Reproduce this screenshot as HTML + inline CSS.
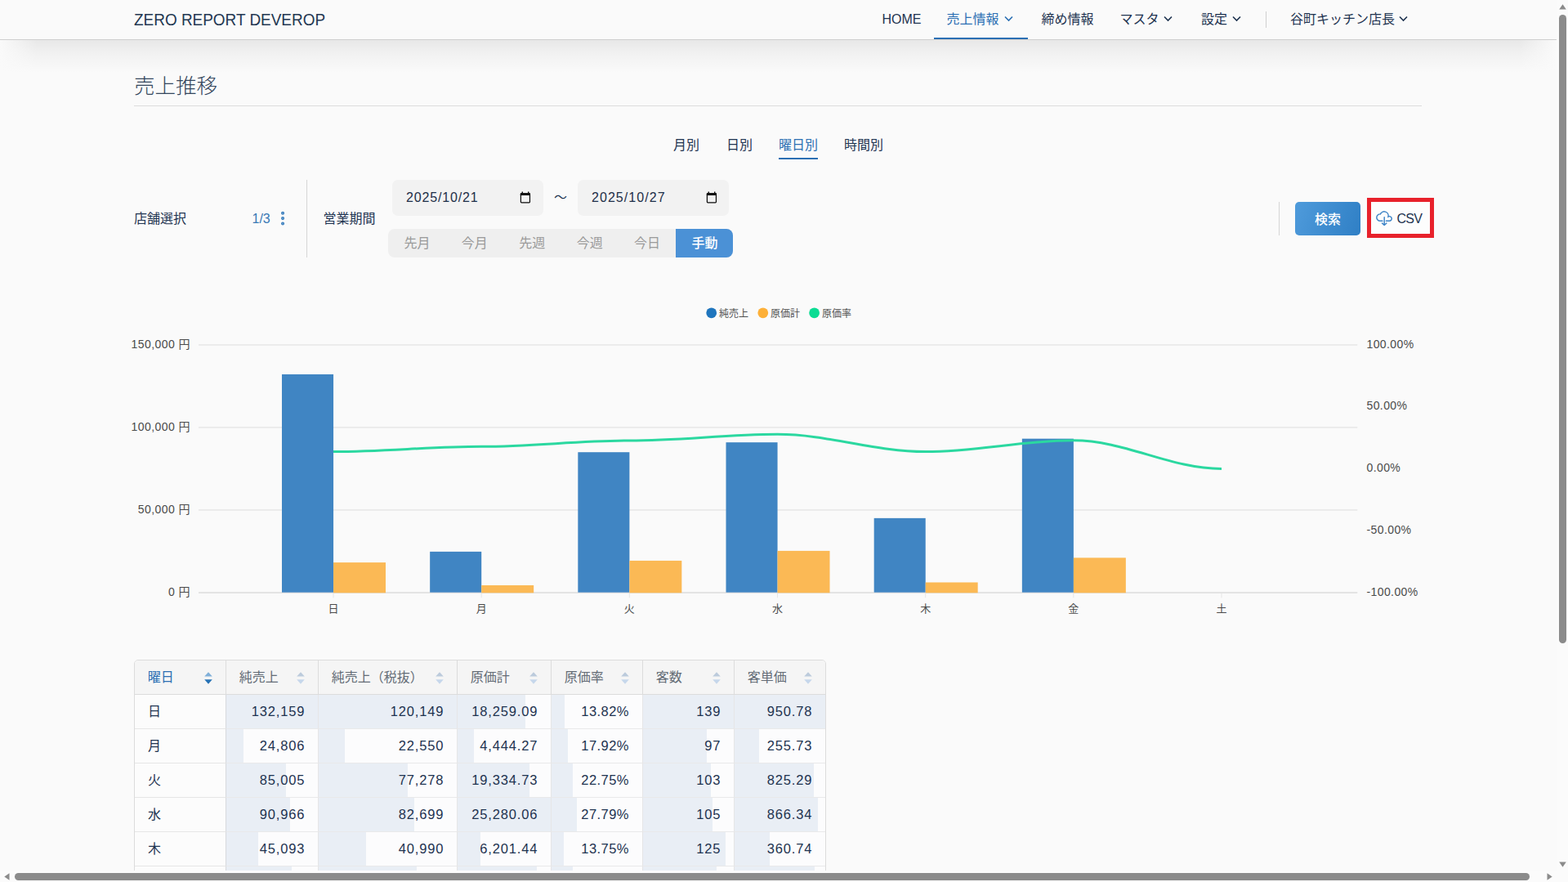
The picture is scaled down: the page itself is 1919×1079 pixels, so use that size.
<!DOCTYPE html>
<html lang="ja">
<head>
<meta charset="utf-8">
<title>売上推移</title>
<style>
*{box-sizing:border-box;margin:0;padding:0}
html,body{width:1919px;height:1079px;overflow:hidden;background:#fafafa}
body{font-family:"Liberation Sans","Noto Sans CJK JP",sans-serif;color:#1e3350;font-size:16px;position:relative}
.abs{position:absolute;white-space:nowrap}
/* header */
#hdr{position:absolute;left:0;top:0;width:1905px;height:49px;background:#fafafa;border-bottom:1px solid #cfcfcf;z-index:5}
#hshadow{position:absolute;left:0;top:49px;width:1905px;height:40px;background:linear-gradient(to bottom,rgba(0,0,0,.075),rgba(0,0,0,.035) 42%,rgba(0,0,0,.01) 80%,rgba(0,0,0,0));z-index:1}
#hshadowL{position:absolute;left:0;top:49px;width:45px;height:40px;background:linear-gradient(to right,#fafafa,rgba(250,250,250,0));z-index:2}
#hshadowR{position:absolute;left:1860px;top:49px;width:45px;height:40px;background:linear-gradient(to left,#fafafa,rgba(250,250,250,0));z-index:2}
#brand{left:164.3px;top:10.5px;font-size:21px;line-height:26px;color:#243852;transform:scaleX(.902);transform-origin:0 0}
.nav{top:0;height:48px;line-height:48px;font-size:16px;color:#1e3350}
.nav.act{color:#2b6fb3}
.chev{position:absolute;top:19px;width:11px;height:8px}
#navul{position:absolute;left:1143px;top:46px;width:115px;height:2px;background:#2b6fb3}
#navdiv{position:absolute;left:1549px;top:14px;width:1px;height:20px;background:#cfcfcf}
/* title */
#title{left:164px;top:85.6px;font-size:25.5px;line-height:38px;font-weight:300;color:#34465c}
#titleline{position:absolute;left:164px;top:129px;width:1576px;height:1px;background:#dcdcdc}
/* tabs */
.tab{top:166px;font-size:16px;line-height:24px;color:#1e3350}
.tab.act{color:#2b6fb3}
#tabul{position:absolute;left:953px;top:193px;width:48px;height:2px;background:#2b6fb3}
/* filter */
.lbl{font-size:16px;line-height:24px;top:256px;color:#1e3350}
.vdiv{position:absolute;width:1px;background:#d6d6d6}
.date{position:absolute;top:220px;width:185px;height:44px;background:#f2f2f2;border-radius:7px}
.date span{position:absolute;left:17px;top:10px;font-size:16px;line-height:24px;letter-spacing:.85px;color:#1e2f48}
.date svg{position:absolute;left:156px;top:14px}
#seg{position:absolute;left:474.5px;top:280px;width:422.5px;height:35px;background:#efefef;border-radius:8px;overflow:hidden}
#seg div{position:absolute;top:0;height:35px;width:70.4px;text-align:center;text-indent:1.5px;font-size:16px;line-height:36px;color:#9a9a9a}
#seg div.on{background:#4b91d6;color:#fff;font-weight:500}
#btn{position:absolute;left:1585px;top:247px;width:80px;height:41px;border-radius:5px;background:linear-gradient(110deg,#4f9bdb,#2f7fc5);color:#fff;font-weight:500;text-align:center;line-height:43px;font-size:16px}
#csv{position:absolute;left:1673px;top:242px;width:82px;height:49px;border:5px solid #e8212b;background:#fdfdfd}
#csv span{position:absolute;left:31.5px;top:9px;font-size:16px;line-height:24px;color:#1e3350;letter-spacing:-.7px}
#csv svg{position:absolute;left:5px;top:10.8px}
/* chart */
#chart{position:absolute;left:0;top:0}
/* table */
#tbl{position:absolute;left:164px;top:807px;width:847px;height:300px;border:1px solid #dcdcdc;border-radius:5px;overflow:hidden;background:#fcfcfc}
#tbl .h{position:absolute;top:0;height:42px;background:#f5f5f5;border-bottom:1px solid #dcdcdc;border-left:1px solid #dcdcdc;font-size:16px;line-height:41px;color:#646c76;padding-left:15.75px}
#tbl .h.first{border-left:none;color:#2b6fb3}
#tbl .h svg{position:absolute;right:16px;top:13.5px}
#tbl .c{position:absolute;height:42px;border-bottom:1px solid rgba(0,0,0,.075);border-left:1px solid rgba(0,0,0,.085);background:#fcfcfd;overflow:hidden;background-clip:border-box}
#tbl .c i{position:absolute;left:-1px;top:0;bottom:-1px;background:#e9eef5}
#tbl .c.f{border-left-color:#d7d9dd}
#tbl .c.p b{letter-spacing:.45px;margin-right:-.45px}
#tbl .c b{position:absolute;right:16.5px;top:0;font-weight:400;font-size:16.5px;line-height:41px;letter-spacing:.85px;color:#1e3350;margin-right:-.85px}
#tbl .d{position:absolute;left:0;width:112px;height:42px;border-bottom:1px solid #e6e6e6;background:#fcfcfc;padding-left:16px;line-height:41px;font-size:16px;color:#1e3350}
/* scrollbars */
#vsb{position:absolute;left:1905px;top:0;width:14px;height:1065px;background:#fbfbfb;z-index:9}
#hsb{position:absolute;left:0;top:1065px;width:1919px;height:14px;background:#fbfbfb;z-index:9}
.thumb{position:absolute;background:#8b8b8b;border-radius:5px}
</style>
</head>
<body>
<div id="hdr">
  <div class="abs" id="brand">ZERO REPORT DEVEROP</div>
  <div class="abs nav" style="left:1079.5px">HOME</div>
  <div class="abs nav act" style="left:1158.5px">売上情報</div>
  <div class="abs nav" style="left:1274.5px">締め情報</div>
  <div class="abs nav" style="left:1370.5px">マスタ</div>
  <div class="abs nav" style="left:1470px">設定</div>
  <div class="abs nav" style="left:1579px">谷町キッチン店長</div>
  <svg class="chev" style="left:1229px" viewBox="0 0 11 8"><path d="M1 1.5 L5.5 6 L10 1.5" fill="none" stroke="#2b6fb3" stroke-width="1.6"/></svg>
  <svg class="chev" style="left:1424px" viewBox="0 0 11 8"><path d="M1 1.5 L5.5 6 L10 1.5" fill="none" stroke="#1e3350" stroke-width="1.6"/></svg>
  <svg class="chev" style="left:1507.5px" viewBox="0 0 11 8"><path d="M1 1.5 L5.5 6 L10 1.5" fill="none" stroke="#1e3350" stroke-width="1.6"/></svg>
  <svg class="chev" style="left:1712px" viewBox="0 0 11 8"><path d="M1 1.5 L5.5 6 L10 1.5" fill="none" stroke="#1e3350" stroke-width="1.6"/></svg>
  <div id="navul"></div>
  <div id="navdiv"></div>
</div>
<div id="hshadow"></div><div id="hshadowL"></div><div id="hshadowR"></div>

<div class="abs" id="title">売上推移</div>
<div id="titleline"></div>

<div class="abs tab" style="left:824px">月別</div>
<div class="abs tab" style="left:889px">日別</div>
<div class="abs tab act" style="left:953px">曜日別</div>
<div class="abs tab" style="left:1033px">時間別</div>
<div id="tabul"></div>

<div class="abs lbl" style="left:164px">店舗選択</div>
<div class="abs lbl" style="left:308.5px;top:255.5px;color:#3878b5;letter-spacing:0">1/3</div>
<svg class="abs" style="left:342px;top:257px" width="9" height="21" viewBox="0 0 9 21"><g fill="#7db0de" stroke="#3b7dbb" stroke-width="1.25"><circle cx="4.05" cy="3.7" r="1.4"/><circle cx="4.05" cy="10.1" r="1.4"/><circle cx="4.05" cy="16.45" r="1.4"/></g></svg>
<div class="vdiv" style="left:375px;top:220px;height:95px"></div>
<div class="abs lbl" style="left:395.5px">営業期間</div>

<div class="date" style="left:480px"><span>2025/10/21</span>
<svg width="15" height="16" viewBox="0 0 15 16"><path d="M3.3 0.4v2.4M10.7 0.4v2.4" stroke="#0a0a0a" stroke-width="1.4" fill="none"/><rect x="1.4" y="2.9" width="11.05" height="11" rx=".8" fill="none" stroke="#0a0a0a" stroke-width="1.2"/><rect x="0.8" y="2.3" width="12.25" height="2.7" rx=".6" fill="#0a0a0a"/></svg></div>
<div class="abs" style="left:678px;top:230px;font-size:16px;line-height:24px;color:#1e3350">～</div>
<div class="date" style="left:707px"><span style="letter-spacing:1.05px">2025/10/27</span>
<svg width="15" height="16" viewBox="0 0 15 16" style="left:156.7px"><path d="M3.3 0.4v2.4M10.7 0.4v2.4" stroke="#0a0a0a" stroke-width="1.4" fill="none"/><rect x="1.4" y="2.9" width="11.05" height="11" rx=".8" fill="none" stroke="#0a0a0a" stroke-width="1.2"/><rect x="0.8" y="2.3" width="12.25" height="2.7" rx=".6" fill="#0a0a0a"/></svg></div>

<div id="seg">
  <div style="left:0">先月</div><div style="left:70.4px">今月</div><div style="left:140.8px">先週</div><div style="left:211.2px">今週</div><div style="left:281.6px">今日</div><div class="on" style="left:352px;width:70.5px">手動</div>
</div>

<div class="vdiv" style="left:1565px;top:247px;height:41px"></div>
<div id="btn">検索</div>
<div id="csv"><svg width="22" height="19" viewBox="0 0 22 19"><path d="M8.9 12.3 H6 A4.2 4.2 0 1 1 6.32 3.91 A5.1 5.1 0 0 1 15.99 7.00 A2.83 2.83 0 1 1 17.37 12.3 H13.4" fill="none" stroke="#3d83c6" stroke-width="1.45" stroke-linecap="round"/><path d="M11.2 7.7 V17.4 M8.5 14.9 L11.2 17.6 L13.9 14.9" fill="none" stroke="#3d83c6" stroke-width="1.45" stroke-linecap="round" stroke-linejoin="round"/></svg><span>CSV</span></div>

<svg id="chart" width="1905" height="800" viewBox="0 0 1905 800" style="font-family:'Liberation Sans','Noto Sans CJK JP',sans-serif">
<rect x="243" y="421.15" width="1418.3" height="1.5" fill="#e7e7e7"/>
<rect x="243" y="522.15" width="1418.3" height="1.5" fill="#e7e7e7"/>
<rect x="243" y="623.2" width="1418.3" height="1.5" fill="#e7e7e7"/>
<rect x="243" y="724.25" width="1418.3" height="1.6" fill="#dedede"/>
<rect x="407.5" y="725.8" width="1" height="5.5" fill="#e6e6e6"/>
<rect x="588.7" y="725.8" width="1" height="5.5" fill="#e6e6e6"/>
<rect x="769.8" y="725.8" width="1" height="5.5" fill="#e6e6e6"/>
<rect x="951.0" y="725.8" width="1" height="5.5" fill="#e6e6e6"/>
<rect x="1132.2" y="725.8" width="1" height="5.5" fill="#e6e6e6"/>
<rect x="1313.3" y="725.8" width="1" height="5.5" fill="#e6e6e6"/>
<rect x="1494.5" y="725.8" width="1" height="5.5" fill="#e6e6e6"/>
<rect x="345.00" y="457.91" width="63.05" height="266.79" fill="#4085c3"/>
<rect x="408.05" y="688.10" width="63.95" height="37.20" fill="#fbb955"/>
<rect x="526.17" y="674.87" width="63.05" height="49.83" fill="#4085c3"/>
<rect x="589.22" y="716.02" width="63.95" height="9.28" fill="#fbb955"/>
<rect x="707.34" y="553.20" width="63.05" height="171.50" fill="#4085c3"/>
<rect x="770.39" y="685.92" width="63.95" height="39.38" fill="#fbb955"/>
<rect x="888.51" y="541.16" width="63.05" height="183.54" fill="#4085c3"/>
<rect x="951.56" y="673.91" width="63.95" height="51.39" fill="#fbb955"/>
<rect x="1069.68" y="633.87" width="63.05" height="90.83" fill="#4085c3"/>
<rect x="1132.73" y="712.47" width="63.95" height="12.83" fill="#fbb955"/>
<rect x="1250.85" y="536.68" width="63.05" height="188.02" fill="#4085c3"/>
<rect x="1313.90" y="682.36" width="63.95" height="42.94" fill="#fbb955"/>
<path d="M408.0 552.51 C471.4 552.51 525.8 546.29 589.2 546.29 C652.6 546.29 706.9 538.97 770.3 538.97 C833.7 538.97 888.1 531.33 951.5 531.33 C1014.9 531.33 1069.3 552.61 1132.7 552.61 C1196.1 552.61 1250.4 538.82 1313.8 538.82 C1377.3 538.82 1431.6 573.45 1495.0 573.45" fill="none" stroke="#2bd8a0" stroke-width="3" stroke-linecap="butt"/>
<text x="233" y="426.0" text-anchor="end" font-size="14" letter-spacing=".45" fill="#4a4a4a">150,000 円</text>
<text x="233" y="527.0" text-anchor="end" font-size="14" letter-spacing=".45" fill="#4a4a4a">100,000 円</text>
<text x="233" y="628.0" text-anchor="end" font-size="14" letter-spacing=".45" fill="#4a4a4a">50,000 円</text>
<text x="233" y="729.0" text-anchor="end" font-size="14" letter-spacing=".45" fill="#4a4a4a">0 円</text>
<text x="1672.5" y="426.0" font-size="14" letter-spacing=".4" fill="#4a4a4a">100.00%</text>
<text x="1672.5" y="500.7" font-size="14" letter-spacing=".4" fill="#4a4a4a">50.00%</text>
<text x="1672.5" y="577.2" font-size="14" letter-spacing=".4" fill="#4a4a4a">0.00%</text>
<text x="1672.5" y="653.0" font-size="14" letter-spacing=".4" fill="#4a4a4a">-50.00%</text>
<text x="1672.5" y="729.0" font-size="14" letter-spacing=".4" fill="#4a4a4a">-100.00%</text>
<text x="408.0" y="749.2" text-anchor="middle" font-size="13" fill="#4a4a4a">日</text>
<text x="589.2" y="749.2" text-anchor="middle" font-size="13" fill="#4a4a4a">月</text>
<text x="770.3" y="749.2" text-anchor="middle" font-size="13" fill="#4a4a4a">火</text>
<text x="951.5" y="749.2" text-anchor="middle" font-size="13" fill="#4a4a4a">水</text>
<text x="1132.7" y="749.2" text-anchor="middle" font-size="13" fill="#4a4a4a">木</text>
<text x="1313.8" y="749.2" text-anchor="middle" font-size="13" fill="#4a4a4a">金</text>
<text x="1495.0" y="749.2" text-anchor="middle" font-size="13" fill="#4a4a4a">土</text>
<circle cx="870.7" cy="382.8" r="6.4" fill="#1f75bd"/>
<text x="880.0" y="388.2" font-size="12" fill="#4f4f4f">純売上</text>
<circle cx="933.8" cy="382.8" r="6.4" fill="#fdb038"/>
<text x="943.0999999999999" y="388.2" font-size="12" fill="#4f4f4f">原価計</text>
<circle cx="996.6" cy="382.8" r="6.4" fill="#0bdc93"/>
<text x="1005.9" y="388.2" font-size="12" fill="#4f4f4f">原価率</text>
</svg>

<div id="tbl">
<div class="h first" style="left:0px;width:111px">曜日<svg width="10" height="15" viewBox="0 0 10 15"><path d="M5 0.3 L9.8 5.4 H0.2Z" fill="#80b0d9"/><path d="M5 14.8 L9.8 9.2 H0.2Z" fill="#2672b5"/></svg></div>
<div class="h" style="left:111px;width:113px">純売上<svg width="10" height="15" viewBox="0 0 10 15"><path d="M5 0.3 L9.8 5.4 H0.2Z" fill="#bccbdc"/><path d="M5 14.8 L9.8 9.2 H0.2Z" fill="#c6d7eb"/></svg></div>
<div class="h" style="left:224px;width:170px">純売上（税抜）<svg width="10" height="15" viewBox="0 0 10 15"><path d="M5 0.3 L9.8 5.4 H0.2Z" fill="#bccbdc"/><path d="M5 14.8 L9.8 9.2 H0.2Z" fill="#c6d7eb"/></svg></div>
<div class="h" style="left:394px;width:115px">原価計<svg width="10" height="15" viewBox="0 0 10 15"><path d="M5 0.3 L9.8 5.4 H0.2Z" fill="#bccbdc"/><path d="M5 14.8 L9.8 9.2 H0.2Z" fill="#c6d7eb"/></svg></div>
<div class="h" style="left:509px;width:112px">原価率<svg width="10" height="15" viewBox="0 0 10 15"><path d="M5 0.3 L9.8 5.4 H0.2Z" fill="#bccbdc"/><path d="M5 14.8 L9.8 9.2 H0.2Z" fill="#c6d7eb"/></svg></div>
<div class="h" style="left:621px;width:112px">客数<svg width="10" height="15" viewBox="0 0 10 15"><path d="M5 0.3 L9.8 5.4 H0.2Z" fill="#bccbdc"/><path d="M5 14.8 L9.8 9.2 H0.2Z" fill="#c6d7eb"/></svg></div>
<div class="h" style="left:733px;width:112px">客単価<svg width="10" height="15" viewBox="0 0 10 15"><path d="M5 0.3 L9.8 5.4 H0.2Z" fill="#bccbdc"/><path d="M5 14.8 L9.8 9.2 H0.2Z" fill="#c6d7eb"/></svg></div>
<div class="d" style="top:42px">日</div>
<div class="c f" style="left:111px;top:42px;width:113px"><i style="width:114.0px"></i><b>132,159</b></div>
<div class="c" style="left:224px;top:42px;width:170px"><i style="width:171.0px"></i><b>120,149</b></div>
<div class="c" style="left:394px;top:42px;width:115px"><i style="width:84.1px"></i><b>18,259.09</b></div>
<div class="c p" style="left:509px;top:42px;width:112px"><i style="width:16.5px"></i><b>13.82%</b></div>
<div class="c" style="left:621px;top:42px;width:112px"><i style="width:113.0px"></i><b>139</b></div>
<div class="c" style="left:733px;top:42px;width:112px"><i style="width:113.0px"></i><b>950.78</b></div>
<div class="d" style="top:84px">月</div>
<div class="c f" style="left:111px;top:84px;width:113px"><i style="width:22.2px"></i><b>24,806</b></div>
<div class="c" style="left:224px;top:84px;width:170px"><i style="width:32.9px"></i><b>22,550</b></div>
<div class="c" style="left:394px;top:84px;width:115px"><i style="width:21.2px"></i><b>4,444.27</b></div>
<div class="c p" style="left:509px;top:84px;width:112px"><i style="width:21.1px"></i><b>17.92%</b></div>
<div class="c" style="left:621px;top:84px;width:112px"><i style="width:79.2px"></i><b>97</b></div>
<div class="c" style="left:733px;top:84px;width:112px"><i style="width:31.1px"></i><b>255.73</b></div>
<div class="d" style="top:126px">火</div>
<div class="c f" style="left:111px;top:126px;width:113px"><i style="width:73.7px"></i><b>85,005</b></div>
<div class="c" style="left:224px;top:126px;width:170px"><i style="width:110.3px"></i><b>77,278</b></div>
<div class="c" style="left:394px;top:126px;width:115px"><i style="width:89.0px"></i><b>19,334.73</b></div>
<div class="c p" style="left:509px;top:126px;width:112px"><i style="width:26.5px"></i><b>22.75%</b></div>
<div class="c" style="left:621px;top:126px;width:112px"><i style="width:84.0px"></i><b>103</b></div>
<div class="c" style="left:733px;top:126px;width:112px"><i style="width:98.2px"></i><b>825.29</b></div>
<div class="d" style="top:168px">水</div>
<div class="c f" style="left:111px;top:168px;width:113px"><i style="width:78.8px"></i><b>90,966</b></div>
<div class="c" style="left:224px;top:168px;width:170px"><i style="width:118.0px"></i><b>82,699</b></div>
<div class="c" style="left:394px;top:168px;width:115px"><i style="width:116.0px"></i><b>25,280.06</b></div>
<div class="c p" style="left:509px;top:168px;width:112px"><i style="width:32.1px"></i><b>27.79%</b></div>
<div class="c" style="left:621px;top:168px;width:112px"><i style="width:85.6px"></i><b>105</b></div>
<div class="c" style="left:733px;top:168px;width:112px"><i style="width:103.1px"></i><b>866.34</b></div>
<div class="d" style="top:210px">木</div>
<div class="c f" style="left:111px;top:210px;width:113px"><i style="width:39.6px"></i><b>45,093</b></div>
<div class="c" style="left:224px;top:210px;width:170px"><i style="width:59.0px"></i><b>40,990</b></div>
<div class="c" style="left:394px;top:210px;width:115px"><i style="width:29.2px"></i><b>6,201.44</b></div>
<div class="c p" style="left:509px;top:210px;width:112px"><i style="width:16.4px"></i><b>13.75%</b></div>
<div class="c" style="left:621px;top:210px;width:112px"><i style="width:101.7px"></i><b>125</b></div>
<div class="c" style="left:733px;top:210px;width:112px"><i style="width:43.5px"></i><b>360.74</b></div>
<div class="d" style="top:252px">金</div>
<div class="c f" style="left:111px;top:252px;width:113px"><i style="width:80.7px"></i><b>93,184</b></div>
<div class="c" style="left:224px;top:252px;width:170px"><i style="width:120.9px"></i><b>84,713</b></div>
<div class="c" style="left:394px;top:252px;width:115px"><i style="width:97.7px"></i><b>21,250.40</b></div>
<div class="c p" style="left:509px;top:252px;width:112px"><i style="width:26.5px"></i><b>22.80%</b></div>
<div class="c" style="left:621px;top:252px;width:112px"><i style="width:91.2px"></i><b>112</b></div>
<div class="c" style="left:733px;top:252px;width:112px"><i style="width:99.0px"></i><b>832.00</b></div>
</div>

<div id="vsb">
  <svg class="abs" style="left:3px;top:5px" width="9" height="7" viewBox="0 0 9 7"><path d="M4.5 0.3 L8.8 6.5 H0.2Z" fill="#8b8b8b"/></svg>
  <div class="thumb" style="left:3px;top:18px;width:9px;height:769px"></div>
  <svg class="abs" style="left:3px;top:1054px" width="9" height="7" viewBox="0 0 9 7"><path d="M4.5 6.7 L8.8 0.5 H0.2Z" fill="#8b8b8b"/></svg>
</div>
<div id="hsb">
  <svg class="abs" style="left:5px;top:3px" width="7" height="9" viewBox="0 0 7 9"><path d="M0.3 4.5 L6.5 0.2 V8.8Z" fill="#8b8b8b"/></svg>
  <div class="thumb" style="left:18px;top:3px;width:1854px;height:9px"></div>
  <svg class="abs" style="left:1893px;top:3px" width="7" height="9" viewBox="0 0 7 9"><path d="M6.7 4.5 L0.5 0.2 V8.8Z" fill="#8b8b8b"/></svg>
</div>
</body>
</html>
